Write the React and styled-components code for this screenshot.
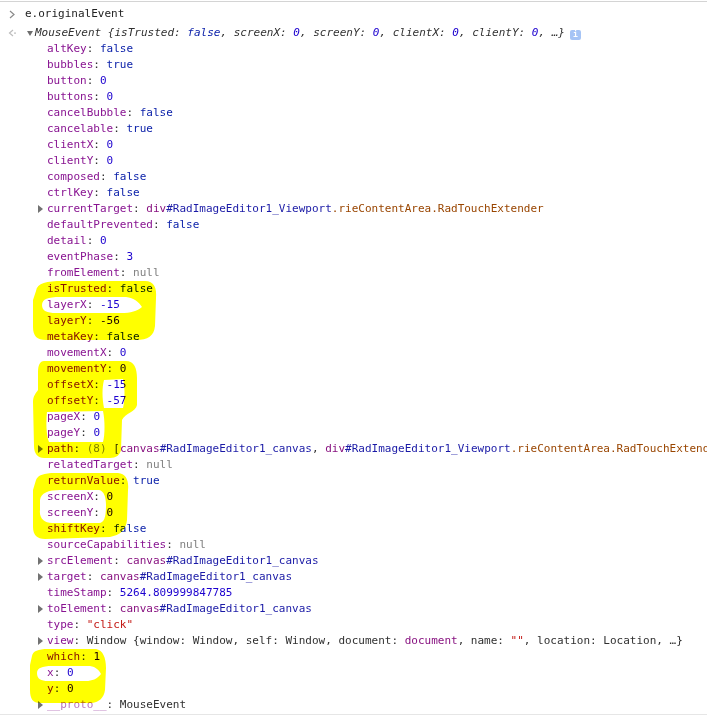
import React from 'react'
import styled, { createGlobalStyle } from 'styled-components'

const GlobalStyle = createGlobalStyle`
  html, body {
    margin: 0;
    padding: 0;
    background: #fff;
  }
`

const colors = {
  name: '#881391',
  kw: '#0d22aa',
  num: '#1c00cf',
  null: '#808080',
  str: '#c41a16',
  tag: '#881280',
  id: '#1a1aa6',
  cls: '#994500',
  gray: '#808080',
  plain: '#303030',
}

const Console = styled.div`
  position: relative;
  width: 707px;
  height: 716px;
  padding-top: 1px;
  box-sizing: border-box;
  overflow: hidden;
  font-family: "DejaVu Sans Mono", "Liberation Mono", monospace;
  font-size: 11px;
  line-height: 16px;
  color: #222;
`

const InputLine = styled.div`
  display: flex;
  align-items: center;
  border-top: 1px solid #d4d4d4;
  padding: 4px 0 3px 8px;
`

const IconSlot = styled.span`
  display: inline-flex;
  align-items: center;
  vertical-align: top;
  width: 17px;
  height: 16px;
  flex: none;
`

const ResultBlock = styled.div`
  padding: 0 0 1px 8px;
  border-bottom: 1px solid #e6e6e6;
`

const HeaderLine = styled.div`
  white-space: pre;
  font-style: italic;
  color: #333;
`

const Toggle = styled.span`
  display: inline-block;
  vertical-align: top;
  width: ${p => p.$w}px;
  height: 16px;
  position: relative;
  &::before {
    content: '';
    position: absolute;
    display: ${p => (p.$dir ? 'block' : 'none')};
    ${p =>
      p.$dir === 'down'
        ? `left: 2px; top: 6px; border-left: 3px solid transparent; border-right: 3px solid transparent; border-top: 5px solid #6e6e6e;`
        : `left: 2px; top: 4px; border-top: 4px solid transparent; border-bottom: 4px solid transparent; border-left: 5px solid #727272;`}
  }
`

const PropList = styled.div`
  display: flex;
  flex-direction: column;
  padding-left: 28px;
`

const PropRow = styled.div`
  white-space: pre;
  overflow: hidden;
  height: 16px;
`

const Tok = styled.span`
  color: ${p => colors[p.$kind] || '#222'};
  font-style: ${p => (p.$italic ? 'italic' : 'normal')};
`

const Name = styled.span`
  color: ${colors.name};
  opacity: ${p => (p.$dim ? 0.6 : 1)};
`

const InfoBadge = styled.span`
  display: inline-flex;
  align-items: center;
  justify-content: center;
  vertical-align: -1px;
  margin-left: 5px;
  width: 11px;
  height: 10px;
  border-radius: 2px;
  background: #a6c4f5;
  color: #fff;
  font-style: normal;
  font-size: 8px;
  font-weight: bold;
  line-height: 10px;
`

const Marker = styled.svg`
  position: absolute;
  top: 0;
  left: 0;
  pointer-events: none;
  mix-blend-mode: multiply;
`

const node = (tag, id, cls) => {
  const out = [['tag', tag], ['id', id]]
  if (cls) out.push(['cls', cls])
  return out
}

const properties = [
  { name: 'altKey', value: [['kw', 'false']] },
  { name: 'bubbles', value: [['kw', 'true']] },
  { name: 'button', value: [['num', '0']] },
  { name: 'buttons', value: [['num', '0']] },
  { name: 'cancelBubble', value: [['kw', 'false']] },
  { name: 'cancelable', value: [['kw', 'true']] },
  { name: 'clientX', value: [['num', '0']] },
  { name: 'clientY', value: [['num', '0']] },
  { name: 'composed', value: [['kw', 'false']] },
  { name: 'ctrlKey', value: [['kw', 'false']] },
  { name: 'currentTarget', more: true, value: node('div', '#RadImageEditor1_Viewport', '.rieContentArea.RadTouchExtender') },
  { name: 'defaultPrevented', value: [['kw', 'false']] },
  { name: 'detail', value: [['num', '0']] },
  { name: 'eventPhase', value: [['num', '3']] },
  { name: 'fromElement', value: [['null', 'null']] },
  { name: 'isTrusted', value: [['kw', 'false']] },
  { name: 'layerX', value: [['num', '-15']] },
  { name: 'layerY', value: [['num', '-56']] },
  { name: 'metaKey', value: [['kw', 'false']] },
  { name: 'movementX', value: [['num', '0']] },
  { name: 'movementY', value: [['num', '0']] },
  { name: 'offsetX', value: [['num', '-15']] },
  { name: 'offsetY', value: [['num', '-57']] },
  { name: 'pageX', value: [['num', '0']] },
  { name: 'pageY', value: [['num', '0']] },
  {
    name: 'path',
    more: true,
    value: [
      ['gray', '(8) '],
      ['plain', '['],
      ...node('canvas', '#RadImageEditor1_canvas'),
      ['plain', ', '],
      ...node('div', '#RadImageEditor1_Viewport', '.rieContentArea.RadTouchExtend'),
    ],
  },
  { name: 'relatedTarget', value: [['null', 'null']] },
  { name: 'returnValue', value: [['kw', 'true']] },
  { name: 'screenX', value: [['num', '0']] },
  { name: 'screenY', value: [['num', '0']] },
  { name: 'shiftKey', value: [['kw', 'false']] },
  { name: 'sourceCapabilities', value: [['null', 'null']] },
  { name: 'srcElement', more: true, value: node('canvas', '#RadImageEditor1_canvas') },
  { name: 'target', more: true, value: node('canvas', '#RadImageEditor1_canvas') },
  { name: 'timeStamp', value: [['num', '5264.809999847785']] },
  { name: 'toElement', more: true, value: node('canvas', '#RadImageEditor1_canvas') },
  { name: 'type', value: [['str', '"click"']] },
  {
    name: 'view',
    more: true,
    value: [
      ['plain', 'Window {window: Window, self: Window, document: '],
      ['tag', 'document'],
      ['plain', ', name: '],
      ['str', '""'],
      ['plain', ', location: Location, …}'],
    ],
  },
  { name: 'which', value: [['num', '1']] },
  { name: 'x', value: [['num', '0']] },
  { name: 'y', value: [['num', '0']] },
  { name: '__proto__', more: true, dim: true, value: [['plain', 'MouseEvent']] },
]

const preview = [
  ['plain', 'MouseEvent {isTrusted: '],
  ['kw', 'false'],
  ['plain', ', screenX: '],
  ['num', '0'],
  ['plain', ', screenY: '],
  ['num', '0'],
  ['plain', ', clientX: '],
  ['num', '0'],
  ['plain', ', clientY: '],
  ['num', '0'],
  ['plain', ', …}'],
]

const PromptIcon = () => (
  <svg width="8" height="9" viewBox="0 0 8 9">
    <path d="M2 1 L6 4.5 L2 8" fill="none" stroke="#8a8a8a" strokeWidth="1.2" />
  </svg>
)

const ResultIcon = () => (
  <svg width="9" height="8" viewBox="0 0 9 8">
    <path d="M5 1 L1.5 4 L5 7" fill="none" stroke="#bdbdbd" strokeWidth="1.2" />
    <rect x="6" y="3.5" width="2" height="1.2" fill="#bdbdbd" />
  </svg>
)

// marker strokes drawn by hand over the console output
const Highlights = () => (
  <Marker width="707" height="716" viewBox="0 0 707 716">
    <g fill="#ffff00" fillRule="evenodd">
      <path d="M36,291 C37,283 47,281 62,281 L145,281 C154,281 157,288 156,298 L155,326 C154,336 148,340 136,340 L46,340 C37,340 33,336 33,327 L33,300 Z M42,305 C42,299 48,297 60,297 L126,297 C134,298 139,302 142,307 C137,311 131,313 121,313 L56,313 C47,313 42,311 42,305 Z" />
      <path d="M44,361 L126,361 C134,361 137,368 137,378 L137,405 C136,412 125,413 122,420 L121,450 C120,455 116,458 110,458 L44,458 C38,458 34,454 34,446 L33,402 C33,396 36,393 38,390 L38,372 C38,365 40,361 44,361 Z M104,380 L123,379 C125,386 125,400 123,408 L104,408 C102,398 102,388 104,380 Z M47,412 L103,411 C105,420 105,435 103,442 L49,442 C46,435 46,420 47,412 Z" />
      <path d="M36,480 C38,475 44,473 55,473 L118,473 C126,474 129,480 128,490 L127,520 C126,530 120,535 110,537 L45,539 C37,539 33,535 33,527 L33,490 Z M40,500 C41,493 48,490 60,490 L99,490 C104,491 106,497 106,505 C106,515 105,523 99,523 L52,523 C44,523 39,518 40,510 Z" />
      <path d="M32,656 C33,651 38,649 48,649 L96,649 C103,650 106,658 106,668 L105,690 C104,698 99,702 92,703 L40,703 C33,703 30,699 30,690 L30,665 Z M37,673 C37,668 42,666 52,666 L90,666 C96,667 99,670 101,674 C97,679 92,681 86,681 L48,681 C41,681 37,679 37,673 Z" />
    </g>
  </Marker>
)

const Value = ({ tokens, italic }) =>
  tokens.map(([kind, text], i) => (
    <Tok key={i} $kind={kind} $italic={italic}>
      {text}
    </Tok>
  ))

export default function App() {
  return (
    <>
      <GlobalStyle />
      <Console>
        <InputLine>
          <IconSlot>
            <PromptIcon />
          </IconSlot>
          <span>e.originalEvent</span>
        </InputLine>
        <ResultBlock>
          <HeaderLine>
            <IconSlot>
              <ResultIcon />
            </IconSlot>
            <Toggle $w={10} $dir="down" />
            <Value tokens={preview} italic />
            <InfoBadge>i</InfoBadge>
          </HeaderLine>
          <PropList>
            {properties.map(p => (
              <PropRow key={p.name}>
                <Toggle $w={11} $dir={p.more ? 'right' : null} />
                <Name $dim={p.dim}>{p.name}</Name>
                <Tok $kind="plain">: </Tok>
                <Value tokens={p.value} />
              </PropRow>
            ))}
          </PropList>
        </ResultBlock>
        <Highlights />
      </Console>
    </>
  )
}
